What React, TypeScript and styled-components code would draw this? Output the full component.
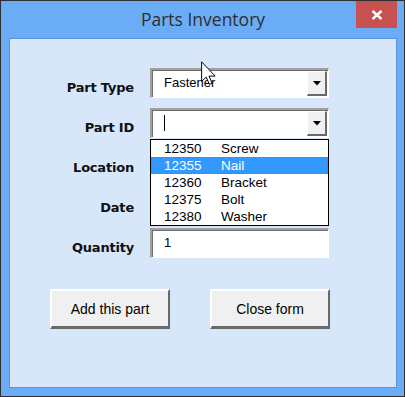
import React from "react";
import styled, { createGlobalStyle } from "styled-components";

const GlobalStyle = createGlobalStyle`
  html, body { margin: 0; padding: 0; background: #ffffff; }
  * { box-sizing: border-box; }
`;

const Window = styled.div`
  position: relative;
  width: 405px;
  height: 397px;
  border: 1px solid #2f2f2f;
  background: #6aadf6;
  display: flex;
  flex-direction: column;
  padding: 0 7px 8px 8px;
  overflow: hidden;
`;

const TitleBar = styled.div`
  display: grid;
  grid-template-columns: 1fr auto 1fr;
  height: 37px;
  align-items: start;
`;

const Title = styled.div`
  grid-column: 2;
  font-family: "Open Sans", "Noto Sans", sans-serif;
  font-size: 17.5px;
  line-height: 37px;
  color: #2e2e2e;
  white-space: nowrap;
`;

const CloseButton = styled.div`
  grid-column: 3;
  justify-self: end;
  width: 41px;
  height: 27px;
  background: #c75050;
  display: flex;
  align-items: center;
  justify-content: center;
`;

const Client = styled.div`
  flex: 1;
  border: 1px solid #5f93d3;
  background: #d7e6f8;
  padding-top: 29px;
  display: flex;
  flex-direction: column;
`;

const Fields = styled.div`
  display: grid;
  grid-template-columns: 124px 179px;
  grid-auto-rows: 30px;
  column-gap: 16px;
  row-gap: 10px;
`;

const Label = styled.div`
  display: flex;
  align-items: center;
  justify-content: flex-end;
  padding-top: 9px;
  font-family: "DejaVu Sans", Verdana, sans-serif;
  font-weight: bold;
  font-size: 13px;
  letter-spacing: -0.2px;
  color: #111;
  white-space: nowrap;
`;

const Sunken = styled.div<{ $open?: boolean }>`
  position: relative;
  z-index: ${(p) => (p.$open ? 3 : 1)};
  display: flex;
  align-items: stretch;
  background: #ffffff;
  border-style: solid;
  border-width: 2px 1px 1px 2px;
  border-color: #a0a0a0 #ffffff #ffffff #a0a0a0;
  box-shadow: inset 1px 1px 0 #6d6d6d;
`;

const Value = styled.div`
  flex: 1;
  display: flex;
  align-items: center;
  padding: 0 0 3px 12px;
  font-family: "Liberation Sans", Arial, sans-serif;
  font-size: 13px;
  color: #000;
  white-space: nowrap;
  overflow: hidden;
`;

const Caret = styled.span`
  display: block;
  width: 1px;
  height: 16px;
  background: #000;
  margin-bottom: -2px;
`;

const DropButton = styled.div`
  width: 20px;
  margin: 1px 1px 1px 0;
  background: #f0f0f0;
  border-style: solid;
  border-width: 1px 2px 2px 1px;
  border-color: #ffffff #696969 #696969 #ffffff;
  display: flex;
  align-items: center;
  justify-content: center;
`;

const DropList = styled.div`
  position: absolute;
  left: -2px;
  right: -1px;
  top: calc(100% + 2px);
  border: 1px solid #000;
  background: #ffffff;
  display: flex;
  flex-direction: column;
`;

const ListRow = styled.div<{ $selected?: boolean }>`
  display: grid;
  grid-template-columns: 57px 1fr;
  height: 17px;
  align-items: center;
  padding-left: 13px;
  font-family: "Liberation Sans", Arial, sans-serif;
  font-size: 13.5px;
  color: ${(p) => (p.$selected ? "#ffffff" : "#000")};
  background: ${(p) => (p.$selected ? "#3399ff" : "transparent")};
  outline: ${(p) => (p.$selected ? "1px dotted #b86a1a" : "none")};
  outline-offset: -1px;
  white-space: nowrap;
`;

const ButtonRow = styled.div`
  display: flex;
  gap: 40px;
  padding-left: 40px;
  margin-top: 31px;
`;

const FormButton = styled.div`
  width: 120px;
  height: 40px;
  background: #f0f0f0;
  border-style: solid;
  border-width: 2px 2px 3px 2px;
  border-color: #ffffff #696969 #696969 #ffffff;
  display: flex;
  align-items: center;
  justify-content: center;
  font-family: "Liberation Sans", Arial, sans-serif;
  font-size: 14px;
  color: #000;
`;

const Pointer = styled.svg`
  position: absolute;
  left: 200px;
  top: 60px;
  z-index: 5;
`;

const Arrow = () => (
  <svg width="8" height="5" viewBox="0 0 8 5">
    <polygon points="0,0 8,0 4,4.5" fill="#000" />
  </svg>
);

const parts = [
  ["12350", "Screw"],
  ["12355", "Nail"],
  ["12360", "Bracket"],
  ["12375", "Bolt"],
  ["12380", "Washer"],
];

export default function App() {
  return (
    <>
      <GlobalStyle />
      <Window>
        <TitleBar>
          <Title>Parts Inventory</Title>
          <CloseButton>
            <svg width="12" height="10" viewBox="0 0 12 10">
              <path d="M1.5 1 L10.5 9 M10.5 1 L1.5 9" stroke="#fff" strokeWidth="2.4" />
            </svg>
          </CloseButton>
        </TitleBar>
        <Client>
          <Fields>
            <Label>Part Type</Label>
            <Sunken>
              <Value>Fastener</Value>
              <DropButton>
                <Arrow />
              </DropButton>
            </Sunken>

            <Label>Part ID</Label>
            <Sunken $open>
              <Value>
                <Caret />
              </Value>
              <DropButton>
                <Arrow />
              </DropButton>
              <DropList>
                {parts.map(([id, name], i) => (
                  <ListRow key={id} $selected={i === 1}>
                    <span>{id}</span>
                    <span>{name}</span>
                  </ListRow>
                ))}
              </DropList>
            </Sunken>

            <Label>Location</Label>
            <Sunken>
              <Value />
              <DropButton>
                <Arrow />
              </DropButton>
            </Sunken>

            <Label>Date</Label>
            <Sunken>
              <Value />
            </Sunken>

            <Label>Quantity</Label>
            <Sunken>
              <Value>1</Value>
            </Sunken>
          </Fields>
          <ButtonRow>
            <FormButton>Add this part</FormButton>
            <FormButton>Close form</FormButton>
          </ButtonRow>
        </Client>
        <Pointer width="16" height="25" viewBox="0 0 13 20">
          <path
            d="M0.5 0.5 V16.5 L4.2 12.9 L6.8 18.8 L9 17.9 L6.5 12.1 H11.5 Z"
            fill="#fff"
            stroke="#000"
            strokeWidth="0.8"
            strokeLinejoin="miter"
          />
        </Pointer>
      </Window>
    </>
  );
}
